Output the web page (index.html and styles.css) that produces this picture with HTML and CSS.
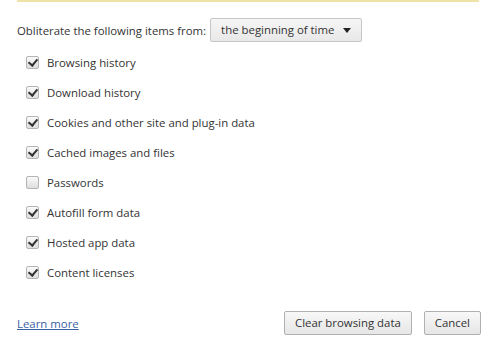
FILE: index.html
```html
<!DOCTYPE html>
<html lang="en">
<head>
    <meta charset="UTF-8">
    <title>Clear browsing data</title>
    <link rel="stylesheet" href="styles.css">
</head>
<body>
    <div class="topline"></div>
    <div class="period">
        <span>Obliterate the following items from:</span>
        <div class="select">the beginning of time<span class="arrow"></span></div>
    </div>
    <ul class="items">
        <li><span class="box checked"></span>Browsing history</li>
        <li><span class="box checked"></span>Download history</li>
        <li><span class="box checked"></span>Cookies and other site and plug-in data</li>
        <li><span class="box checked"></span>Cached images and files</li>
        <li><span class="box"></span>Passwords</li>
        <li><span class="box checked"></span>Autofill form data</li>
        <li><span class="box checked"></span>Hosted app data</li>
        <li><span class="box checked"></span>Content licenses</li>
    </ul>
    <div class="footer">
        <a href="#" class="learn">Learn more</a>
        <div class="buttons">
            <div class="btn">Clear browsing data</div>
            <div class="btn">Cancel</div>
        </div>
    </div>
</body>
</html>
```
FILE: styles.css
```css
body{
    margin: 0;
    width: 500px;
    height: 350px;
    background: #fff;
    font-family: "Open Sans", "Noto Sans", sans-serif;
    font-size: 11.4px;
    color: #333;
}
.topline{
    margin: 0 21px 0 17px;
    height: 2px;
    background: #efe3a6;
}
.period{
    display: flex;
    align-items: center;
    padding: 16px 0 0 17px;
    height: 24px;
}
.select{
    margin-left: 4px;
    height: 22px;
    line-height: 22px;
    padding: 0 10px 0 10px;
    border: 1px solid #c6c6c6;
    border-radius: 2px;
    background: linear-gradient(#f6f6f6, #e8e8e8);
    display: flex;
    align-items: center;
}
.arrow{
    margin-left: 9px;
    width: 0;
    height: 0;
    border-left: 4px solid transparent;
    border-right: 4px solid transparent;
    border-top: 5px solid #222;
}
.items{
    list-style: none;
    margin: 5px 0 0 0;
    padding: 0 0 0 26px;
}
.items li{
    height: 30px;
    display: flex;
    align-items: center;
}
.box{
    box-sizing: border-box;
    width: 13px;
    height: 13px;
    margin-right: 8px;
    border: 1px solid #b4b4b4;
    border-radius: 2px;
    background: linear-gradient(#fafafa, #dedede);
    position: relative;
}
.box.checked::after{
    content: "";
    position: absolute;
    left: 3px;
    top: 0px;
    width: 4px;
    height: 7px;
    border-right: 2px solid #333;
    border-bottom: 2px solid #333;
    transform: rotate(40deg);
}
.footer{
    display: flex;
    justify-content: space-between;
    align-items: center;
    padding: 24px 19px 0 17px;
}
.learn{
    color: #3a5fa5;
}
.buttons{
    display: flex;
    gap: 12px;
}
.btn{
    height: 22px;
    line-height: 22px;
    padding: 0 10px;
    border: 1px solid #b0b0b0;
    border-radius: 2px;
    background: linear-gradient(#f8f8f8, #e6e6e6);
    color: #333;
    text-align: center;
}
```
